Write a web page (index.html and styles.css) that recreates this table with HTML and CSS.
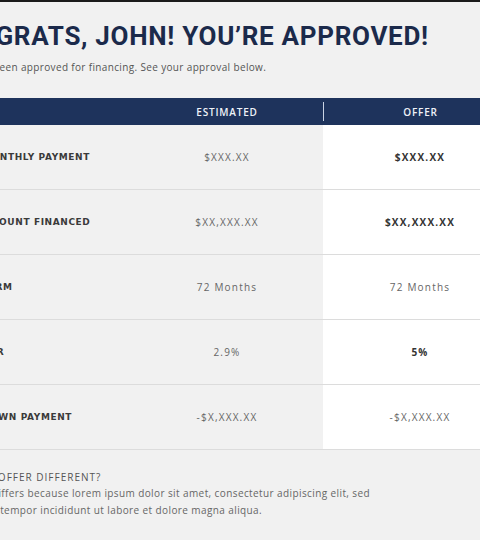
FILE: index.html
```html
<!DOCTYPE html>
<html>
<head>
<meta charset="utf-8">
<link rel="stylesheet" href="styles.css">
</head>
<body>
<div class="top-line"></div>
<main class="page">
  <h1 class="title">CONGRATS, JOHN! YOU’RE APPROVED!</h1>
  <p class="sub">You’ve been approved for financing. See your approval below.</p>
  <div class="table">
    <div class="row head">
      <div class="cell label"></div>
      <div class="cell est">ESTIMATED</div>
      <div class="cell offer">OFFER</div>
    </div>
    <div class="row">
      <div class="cell label">MONTHLY PAYMENT</div>
      <div class="cell est">$XXX.XX</div>
      <div class="cell offer strong">$XXX.XX</div>
    </div>
    <div class="row">
      <div class="cell label">AMOUNT FINANCED</div>
      <div class="cell est">$XX,XXX.XX</div>
      <div class="cell offer strong">$XX,XXX.XX</div>
    </div>
    <div class="row">
      <div class="cell label">TERM</div>
      <div class="cell est">72 Months</div>
      <div class="cell offer">72 Months</div>
    </div>
    <div class="row">
      <div class="cell label">APR</div>
      <div class="cell est">2.9%</div>
      <div class="cell offer strong">5%</div>
    </div>
    <div class="row">
      <div class="cell label">DOWN PAYMENT</div>
      <div class="cell est">-$X,XXX.XX</div>
      <div class="cell offer">-$X,XXX.XX</div>
    </div>
  </div>
  <section class="why">
    <h2 class="why-title">WHY IS MY OFFER DIFFERENT?</h2>
    <p class="why-text">Your offer differs because lorem ipsum dolor sit amet, consectetur adipiscing elit, sed<br>do eiusmod tempor incididunt ut labore et dolore magna aliqua.</p>
  </section>
</main>
</body>
</html>
```
FILE: styles.css
```css
html, body {
  margin: 0;
  padding: 0;
  background: #f1f1f1;
  overflow: hidden;
}
body {
  width: 480px;
  height: 540px;
  font-family: "Open Sans", "DejaVu Sans", sans-serif;
}
.top-line {
  height: 2px;
  background: #1b1b1b;
}
.page {
  width: 577px;
  margin-left: -60px;
}
.title {
  margin: 18px 0 0 0;
  font-family: Roboto, "DejaVu Sans", sans-serif;
  font-weight: 700;
  font-size: 26px;
  line-height: 32px;
  letter-spacing: 0.7px;
  color: #1b2a4b;
}
.sub {
  margin: 8px 0 0 0;
  padding-left: 18px;
  font-size: 10px;
  line-height: 14px;
  letter-spacing: 0.35px;
  color: #555;
}
.table {
  margin-top: 24px;
}
.row {
  display: grid;
  grid-template-columns: 191px 192px 194px;
  height: 64px;
  border-bottom: 1px solid #dcdcdc;
}
.row.head {
  height: 27px;
  border-bottom: none;
  background: #1e335c;
}
.cell {
  display: flex;
  align-items: center;
  justify-content: center;
  font-size: 10px;
  letter-spacing: 1.2px;
  color: #666;
}
.cell.label {
  justify-content: flex-start;
  padding-left: 42px;
  font-family: "DejaVu Sans", sans-serif;
  font-weight: 700;
  font-size: 9px;
  letter-spacing: 0.6px;
  color: #3a3a3a;
}
.row .offer {
  background: #ffffff;
}
.head .cell {
  color: #eef2f8;
  font-size: 10px;
  letter-spacing: 0.8px;
  font-weight: 600;
  background: transparent;
}
.head .offer {
  border-left: 1.5px solid #c9d3e3;
  height: 19px;
  align-self: center;
}
.cell.strong {
  font-weight: 700;
  color: #333;
}
.why {
  padding-top: 19px;
  margin-left: -5px;
}
.why-title {
  margin: 0;
  font-size: 10px;
  font-weight: 400;
  letter-spacing: 1px;
  color: #555;
  line-height: 16px;
}
.why-text {
  margin: 0 0 0 3px;
  font-size: 10px;
  line-height: 17px;
  letter-spacing: 0.4px;
  color: #666;
  white-space: nowrap;
}
```
